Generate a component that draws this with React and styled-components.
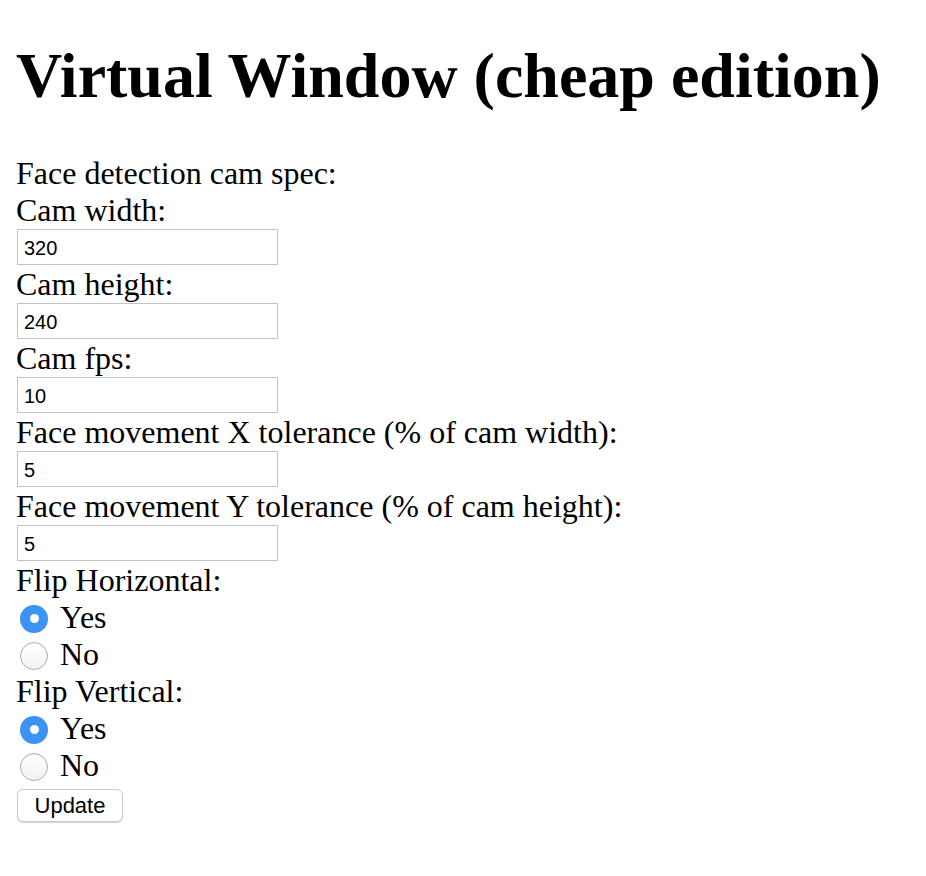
import React, { useState } from 'react'
import styled, { createGlobalStyle } from 'styled-components'

// Global
const GlobalStyle = createGlobalStyle`
  html, body {
    margin: 0;
    padding: 0;
    background: #ffffff;
  }
  body {
    font-family: "Liberation Serif", "Times New Roman", serif;
    color: #000000;
  }
`

// Styled-Component
const Page = styled.div`
  padding: 39px 16px 40px;
`

const Title = styled.h1`
  margin: 0 0 42px;
  font-family: "Liberation Serif", "Times New Roman", serif;
  font-size: 64px;
  font-weight: bold;
  line-height: 74px;
  white-space: nowrap;
`

const Form = styled.form`
  display: flex;
  flex-direction: column;
  align-items: flex-start;
`

const Line = styled.div`
  font-size: 32px;
  line-height: 37px;
  white-space: nowrap;
`

const NumberInput = styled.input`
  box-sizing: border-box;
  width: 261px;
  height: 36px;
  margin: 0 0 1px 1px;
  padding: 2px 6px 0;
  border: 1px solid #c3c3c3;
  border-radius: 0;
  background: #ffffff;
  font-family: "Liberation Sans", Arial, sans-serif;
  font-size: 20px;
  color: #000000;
  outline: none;
`

const RadioRow = styled.label`
  display: flex;
  align-items: center;
  height: 37px;
  font-size: 32px;
  line-height: 37px;
  cursor: pointer;
`

const Radio = styled.input`
  appearance: none;
  -webkit-appearance: none;
  box-sizing: border-box;
  width: 28px;
  height: 28px;
  margin: 2px 12px 0 4px;
  border-radius: 50%;
  border: 1px solid #aeaeae;
  background: linear-gradient(#ffffff, #f2f2f2);
  box-shadow: inset 0 1px 1px rgba(0, 0, 0, 0.06);
  position: relative;
  cursor: pointer;

  &:checked {
    border: none;
    background: #3b93f6;
    box-shadow: none;
  }

  &:checked::after {
    content: '';
    position: absolute;
    left: 50%;
    top: 50%;
    width: 9px;
    height: 9px;
    margin: -4.5px 0 0 -4.5px;
    border-radius: 50%;
    background: #ffffff;
  }
`

const UpdateButton = styled.button`
  box-sizing: border-box;
  width: 106px;
  height: 33px;
  margin: 5px 0 0 1px;
  padding: 0;
  border: 1px solid #cbcbcb;
  border-radius: 6px;
  background: #ffffff;
  box-shadow: 0 1px 1px rgba(0, 0, 0, 0.18);
  font-family: "Liberation Sans", Arial, sans-serif;
  font-size: 22px;
  color: #000000;
  cursor: pointer;
`

const fields = [
  { name: 'camWidth', label: 'Cam width:', value: '320' },
  { name: 'camHeight', label: 'Cam height:', value: '240' },
  { name: 'camFps', label: 'Cam fps:', value: '10' },
  { name: 'xTolerance', label: 'Face movement X tolerance (% of cam width):', value: '5' },
  { name: 'yTolerance', label: 'Face movement Y tolerance (% of cam height):', value: '5' },
]

const flips = [
  { name: 'flipHorizontal', label: 'Flip Horizontal:' },
  { name: 'flipVertical', label: 'Flip Vertical:' },
]

export default function App() {
  const [values, setValues] = useState(
    Object.fromEntries(fields.map((f) => [f.name, f.value]))
  )
  const [flipState, setFlipState] = useState({ flipHorizontal: true, flipVertical: true })

  return (
    <>
      <GlobalStyle />
      <Page>
        <Title>Virtual Window (cheap edition)</Title>
        <Form onSubmit={(e) => e.preventDefault()}>
          <Line>Face detection cam spec:</Line>
          {fields.map((f) => (
            <React.Fragment key={f.name}>
              <Line>{f.label}</Line>
              <NumberInput
                type="text"
                name={f.name}
                value={values[f.name]}
                onChange={(e) => setValues({ ...values, [f.name]: e.target.value })}
              />
            </React.Fragment>
          ))}
          {flips.map((f) => (
            <React.Fragment key={f.name}>
              <Line>{f.label}</Line>
              <RadioRow>
                <Radio
                  type="radio"
                  name={f.name}
                  checked={flipState[f.name]}
                  onChange={() => setFlipState({ ...flipState, [f.name]: true })}
                />
                Yes
              </RadioRow>
              <RadioRow>
                <Radio
                  type="radio"
                  name={f.name}
                  checked={!flipState[f.name]}
                  onChange={() => setFlipState({ ...flipState, [f.name]: false })}
                />
                No
              </RadioRow>
            </React.Fragment>
          ))}
          <UpdateButton type="submit">Update</UpdateButton>
        </Form>
      </Page>
    </>
  )
}
